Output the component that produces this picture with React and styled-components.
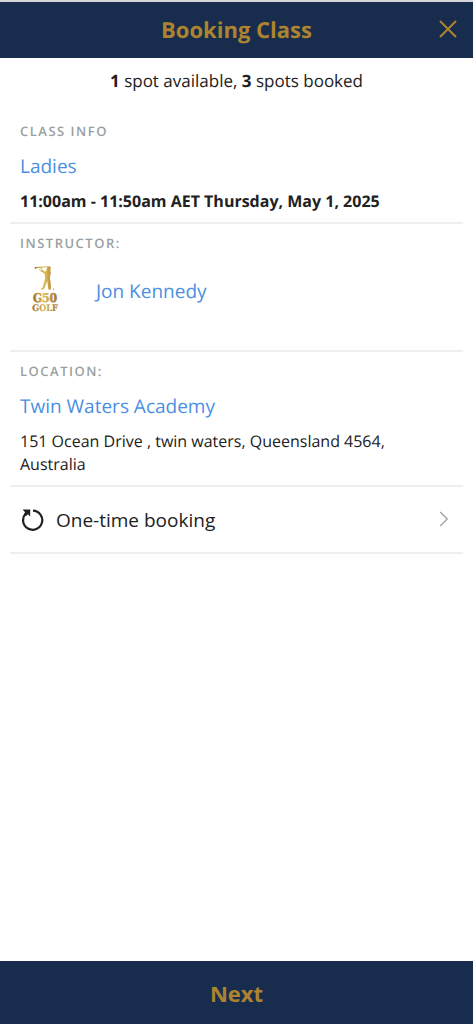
import styled, { createGlobalStyle } from "styled-components";

const GlobalStyle = createGlobalStyle`
  * {
    box-sizing: border-box;
  }

  body {
    margin: 0;
    background-color: #ffffff;
    color: #212121;
    font-family: "Open Sans", "Noto Sans", sans-serif;
    font-size: 16px;
    line-height: 23px;
    text-rendering: geometricPrecision;
  }
`;

const Page = styled.div`
  display: flex;
  flex-direction: column;
  min-height: 100vh;
`;

const Header = styled.header`
  display: grid;
  grid-template-columns: 50px 1fr 50px;
  align-items: center;
  height: 58px;
  border-top: 2px solid #d3d5d8;
  background-color: #182d4d;
  color: #ac832e;
`;

const Title = styled.h1`
  grid-column: 2;
  margin: 0;
  font-size: 22px;
  line-height: 28px;
  font-weight: 700;
  text-align: center;
`;

const CloseButton = styled.button`
  display: flex;
  align-items: center;
  justify-content: center;
  height: 50px;
  padding: 0 0 2px;
  border: 0;
  background: none;
  color: inherit;
  cursor: pointer;
`;

const Main = styled.main`
  flex: 1;
  padding: 0 10px;
`;

const Spots = styled.p`
  margin: 0;
  padding: 11px 0 20px;
  font-size: 17px;
  text-align: center;
`;

const Section = styled.section`
  min-height: ${(props) => (props.$tall ? "128px" : "0")};
  padding: 10px 10px 9px;
  border-bottom: 2px solid #ebeff2;
`;

const Label = styled.h2`
  margin: 0 0 12px;
  color: #9a9fa1;
  font-size: 13px;
  line-height: 18px;
  font-weight: 600;
  letter-spacing: 1.5px;
  text-transform: uppercase;
`;

const Link = styled.a`
  color: #4a8fe2;
  font-size: 19px;
  line-height: 28px;
  text-decoration: none;
`;

const Detail = styled.p`
  margin: 10px 0 0;
  font-weight: ${(props) => (props.$strong ? 700 : 400)};
`;

const Instructor = styled.div`
  display: flex;
  align-items: center;
  gap: 26px;
`;

const BookingType = styled.button`
  display: flex;
  align-items: center;
  width: 100%;
  height: 67px;
  padding: 0 14px 0 10px;
  border: 0;
  border-bottom: 2px solid #ebeff2;
  background: none;
  color: inherit;
  font-family: inherit;
  font-size: 19px;
  text-align: left;
  cursor: pointer;
`;

const BookingText = styled.span`
  flex: 1;
  margin-left: 11px;
`;

const NextButton = styled.button`
  height: 63px;
  padding: 0;
  border: 0;
  background-color: #182d4d;
  color: #ac832e;
  font-family: inherit;
  font-size: 22px;
  font-weight: 700;
  cursor: pointer;
`;

const CloseIcon = () => (
  <svg width="18" height="18" viewBox="0 0 18 18" aria-hidden="true">
    <path
      d="M1.5 1.5l15 15M16.5 1.5l-15 15"
      stroke="currentColor"
      strokeWidth="2"
      strokeLinecap="round"
    />
  </svg>
);

const RepeatIcon = () => (
  <svg width="25" height="24" viewBox="0 0 25 24" fill="none" aria-hidden="true">
    <path
      d="M13 2.6a9.6 9.6 0 1 1-7.3 3"
      stroke="currentColor"
      strokeWidth="2.2"
    />
    <path d="M2.6 1.6h7.6v6.8L7.9 6.3 5.9 8.2 4 6.4 5.1 4.2z" fill="currentColor" />
  </svg>
);

const ChevronIcon = () => (
  <svg width="10" height="18" viewBox="0 0 10 18" fill="none" aria-hidden="true">
    <path d="M1.2 1l7 7-7 7" stroke="#a6a8ab" strokeWidth="1.5" />
  </svg>
);

const GolfLogo = () => (
  <svg width="50" height="54" viewBox="0 0 50 54" role="img" aria-label="G50 Golf">
    <defs>
      <linearGradient id="gold" gradientUnits="userSpaceOnUse" x1="12" y1="0" x2="38" y2="0">
        <stop offset="0" stopColor="#a06c24" />
        <stop offset="0.5" stopColor="#dcbc58" />
        <stop offset="0.75" stopColor="#b98c3b" />
        <stop offset="1" stopColor="#a06d29" />
      </linearGradient>
    </defs>
    <g fill="url(#gold)">
      <path d="M14.8 3l13.4-.8v1l-11.7.7-.4 1.1h-1.3z" />
      <path d="M27.4 3.2c.6-1.3 3-1.3 3.3.2.2.9 0 1.9-.5 2.5l.6 2.4-.9 6.2c.8 3.4 1.2 6.9 1 11.1h-2.6l-1-8.6-3.1 7.8-3.2 1.1v-1l1.5-1 2.6-9.4-.6-4.8-4-3 .8-1.2 4.3 2.2z" />
      <circle cx="33.5" cy="25.2" r="0.6" />
      <text
        x="25"
        y="38"
        textAnchor="middle"
        fontFamily="DejaVu Serif Condensed, DejaVu Serif, serif"
        fontWeight="700"
        fontSize="12"
        stroke="url(#gold)"
        strokeWidth="0.5"
      >
        G50
      </text>
      <text
        x="25"
        y="47"
        textAnchor="middle"
        fontFamily="DejaVu Serif Condensed, DejaVu Serif, serif"
        fontWeight="700"
        fontSize="9"
        stroke="url(#gold)"
        strokeWidth="0.2"
      >
        GOLF
      </text>
    </g>
    <circle cx="21" cy="5.7" r="1.4" fill="none" stroke="#d8b967" strokeWidth="0.7" />
  </svg>
);

function App() {
  return (
    <Page>
      <GlobalStyle />
      <Header>
        <Title>Booking Class</Title>
        <CloseButton type="button" aria-label="Close">
          <CloseIcon />
        </CloseButton>
      </Header>
      <Main>
        <Spots>
          <b>1</b> spot available, <b>3</b> spots booked
        </Spots>
        <Section>
          <Label>Class info</Label>
          <Link href="#ladies">Ladies</Link>
          <Detail $strong>11:00am - 11:50am AET Thursday, May 1, 2025</Detail>
        </Section>
        <Section $tall>
          <Label>Instructor:</Label>
          <Instructor>
            <GolfLogo />
            <Link href="#jon-kennedy">Jon Kennedy</Link>
          </Instructor>
        </Section>
        <Section>
          <Label>Location:</Label>
          <Link href="#twin-waters">Twin Waters Academy</Link>
          <Detail>151 Ocean Drive , twin waters, Queensland 4564, Australia</Detail>
        </Section>
        <BookingType type="button">
          <RepeatIcon />
          <BookingText>One-time booking</BookingText>
          <ChevronIcon />
        </BookingType>
      </Main>
      <NextButton type="button">Next</NextButton>
    </Page>
  );
}

export default App;
